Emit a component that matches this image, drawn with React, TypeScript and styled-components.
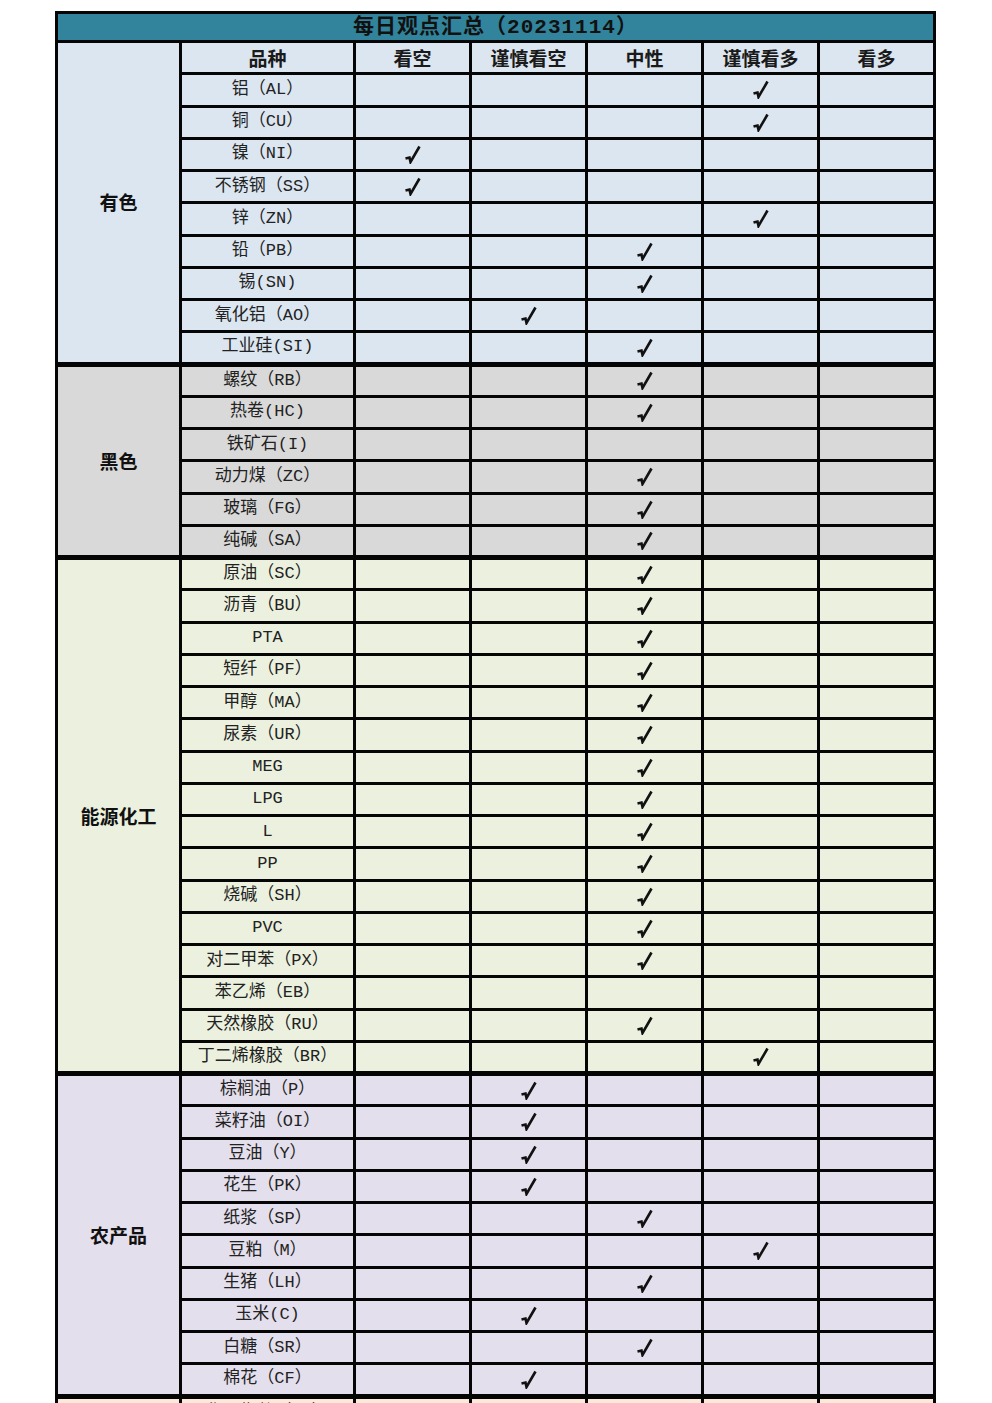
import styled, { createGlobalStyle } from "styled-components";

const Colors = {
  title: "#31849b",
  metal: "#dce6f1",
  ferrous: "#d9d9d9",
  energy: "#ebf1de",
  farm: "#e4dfec",
  shipping: "#fde9d9",
  line: "#050505",
  text: "#1a1a1a",
};

const GlobalStyle = createGlobalStyle`
  body {
    margin: 0;
    background: #ffffff;
  }
`;

const Page = styled.div`
  height: 1403px;
  box-sizing: border-box;
  padding: 11px 0 0 55px;
  overflow: hidden;
`;

const Sheet = styled.table`
  border-collapse: collapse;
  table-layout: fixed;
  width: 878px;
  font-family: "Liberation Mono", "Noto Sans CJK SC", monospace;
  color: ${Colors.text};
`;

const Col = styled.col<{ $w: number }>`
  width: ${(p) => p.$w}px;
`;

const TitleCell = styled.td`
  height: 24px;
  padding: 2px 0 0;
  background: ${Colors.title};
  border: 3px solid ${Colors.line};
  text-align: center;
  font-size: 21px;
  font-weight: 700;
  letter-spacing: 1px;
  line-height: 24px;
  color: #111;
`;

const Row = styled.tr<{ $first?: boolean }>`
  height: 32.25px;
  & > td {
    border-top-width: ${(p) => (p.$first ? "5px" : "3px")};
  }
`;

const Cell = styled.td<{ $bg: string }>`
  padding: 0;
  border: 3px solid ${Colors.line};
  background: ${(p) => p.$bg};
  text-align: center;
  vertical-align: middle;
  overflow: hidden;
  white-space: nowrap;
`;

const HeadCell = styled(Cell)`
  font-family: "Noto Sans CJK SC", sans-serif;
  font-size: 19px;
  font-weight: 700;
  line-height: 24px;
`;

const GroupCell = styled(Cell)`
  font-family: "Noto Sans CJK SC", sans-serif;
  font-size: 19px;
  font-weight: 700;
  line-height: 24px;
  color: #111;
`;

const NameCell = styled(Cell)`
  font-size: 17px;
  line-height: 22px;
  color: #222;
`;

const Check = () => (
  <svg width="18" height="19" viewBox="0 0 18 19" style={{ verticalAlign: "middle" }}>
    <path
      d="M1.5 13.5 L5.5 12.5 L6.5 17 L15.5 1.5"
      fill="none"
      stroke="#111"
      strokeWidth="2.6"
      strokeLinejoin="miter"
    />
  </svg>
);

const stances = ["看空", "谨慎看空", "中性", "谨慎看多", "看多"];

type Group = { name: string; bg: string; items: [string, number][] };

const groups: Group[] = [
  {
    name: "有色",
    bg: Colors.metal,
    items: [
      ["铝（AL）", 3],
      ["铜（CU）", 3],
      ["镍（NI）", 0],
      ["不锈钢（SS）", 0],
      ["锌（ZN）", 3],
      ["铅（PB）", 2],
      ["锡(SN)", 2],
      ["氧化铝（AO）", 1],
      ["工业硅(SI)", 2],
    ],
  },
  {
    name: "黑色",
    bg: Colors.ferrous,
    items: [
      ["螺纹（RB）", 2],
      ["热卷(HC)", 2],
      ["铁矿石(I)", -1],
      ["动力煤（ZC）", 2],
      ["玻璃（FG）", 2],
      ["纯碱（SA）", 2],
    ],
  },
  {
    name: "能源化工",
    bg: Colors.energy,
    items: [
      ["原油（SC）", 2],
      ["沥青（BU）", 2],
      ["PTA", 2],
      ["短纤（PF）", 2],
      ["甲醇（MA）", 2],
      ["尿素（UR）", 2],
      ["MEG", 2],
      ["LPG", 2],
      ["L", 2],
      ["PP", 2],
      ["烧碱（SH）", 2],
      ["PVC", 2],
      ["对二甲苯（PX）", 2],
      ["苯乙烯（EB）", -1],
      ["天然橡胶（RU）", 2],
      ["丁二烯橡胶（BR）", 3],
    ],
  },
  {
    name: "农产品",
    bg: Colors.farm,
    items: [
      ["棕榈油（P）", 1],
      ["菜籽油（OI）", 1],
      ["豆油（Y）", 1],
      ["花生（PK）", 1],
      ["纸浆（SP）", 2],
      ["豆粕（M）", 3],
      ["生猪（LH）", 2],
      ["玉米(C)", 1],
      ["白糖（SR）", 2],
      ["棉花（CF）", 1],
    ],
  },
  {
    name: "航运",
    bg: Colors.shipping,
    items: [["集运指数（EC）", 1]],
  },
];

export default function App() {
  return (
    <>
      <GlobalStyle />
      <Page>
        <Sheet>
          <colgroup>
            <Col $w={124} />
            <Col $w={174} />
            <Col $w={116} />
            <Col $w={116} />
            <Col $w={116} />
            <Col $w={116} />
            <Col $w={116} />
          </colgroup>
          <tbody>
            <tr>
              <TitleCell colSpan={7}>每日观点汇总（20231114）</TitleCell>
            </tr>
            {groups.map((g, gi) => {
              const withHead = gi === 0;
              const span = g.items.length + (withHead ? 1 : 0);
              const groupCell = (
                <GroupCell $bg={g.bg} rowSpan={span}>
                  {g.name}
                </GroupCell>
              );
              return [
                withHead && (
                  <Row key="head">
                    {groupCell}
                    <HeadCell $bg={g.bg}>品种</HeadCell>
                    {stances.map((s) => (
                      <HeadCell key={s} $bg={g.bg}>
                        {s}
                      </HeadCell>
                    ))}
                  </Row>
                ),
                ...g.items.map(([name, mark], i) => (
                  <Row key={name} $first={i === 0 && !withHead && gi > 0}>
                    {i === 0 && !withHead && groupCell}
                    <NameCell $bg={g.bg}>{name}</NameCell>
                    {stances.map((s, si) => (
                      <Cell key={s} $bg={g.bg}>
                        {mark === si && <Check />}
                      </Cell>
                    ))}
                  </Row>
                )),
              ];
            })}
          </tbody>
        </Sheet>
      </Page>
    </>
  );
}
